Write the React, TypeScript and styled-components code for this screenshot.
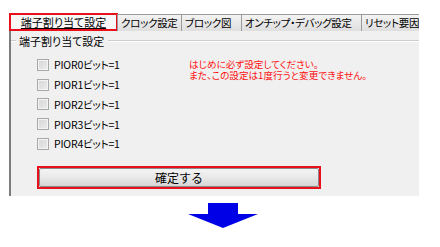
import React from 'react';
import styled, { createGlobalStyle } from 'styled-components';

const GlobalStyle = createGlobalStyle`
  html, body {
    margin: 0;
    padding: 0;
    background: #ffffff;
  }
  body {
    font-family: "Noto Sans CJK JP", "Liberation Sans", sans-serif;
    color: #000;
  }
`;

const Page = styled.div`
  width: 440px;
  height: 247px;
  padding: 13px 0 0 9px;
  box-sizing: border-box;
  overflow: hidden;
`;

const Window = styled.div`
  width: 410px;
`;

const TabBar = styled.div`
  display: flex;
  align-items: flex-end;
  height: 18px;
  overflow: hidden;
  white-space: nowrap;
`;

const Tab = styled.div<{ $width?: number; $active?: boolean }>`
  flex: 0 0 auto;
  width: ${p => (p.$width ? `${p.$width}px` : 'auto')};
  box-sizing: border-box;
  height: ${p => (p.$active ? 18 : 17)}px;
  padding: 0 ${p => (p.$active ? 5 : 3)}px;
  font-size: ${p => (p.$active ? 11 : 10.5)}px;
  letter-spacing: ${p => (p.$active ? 0 : -0.3)}px;
  line-height: ${p => (p.$active ? 14 : 15)}px;
  font-feature-settings: "palt";
  overflow: hidden;
  text-align: ${p => (p.$active ? 'center' : 'left')};
  background: ${p => (p.$active ? '#f7f7f7' : 'linear-gradient(#f3f3f3, #dedede)')};
  border: ${p => (p.$active ? '2px solid #e8101a' : '1px solid #9a9a9a')};
  border-bottom: ${p => (p.$active ? '2px solid #e8101a' : 'none')};
  margin-left: ${p => (p.$active ? 0 : -1)}px;
  text-decoration: ${p => (p.$active ? 'underline' : 'none')};
  text-underline-offset: 1px;
`;

const Panel = styled.div`
  height: 165px;
  background: #f0f0f0;
  border-left: 2px solid #7c7c7c;
  box-sizing: border-box;
  padding: 4px 0 6px 0;
  display: flex;
  flex-direction: column;
`;

const GroupHeader = styled.div`
  display: flex;
  align-items: center;
  height: 12px;
  font-size: 11px;
  line-height: 12px;
  font-feature-settings: "palt";
`;

const GroupLine = styled.span<{ $width?: number }>`
  flex: ${p => (p.$width ? `0 0 ${p.$width}px` : '1 1 auto')};
  height: 0;
  border-top: 1px solid #cdcdcd;
  border-bottom: 1px solid #ffffff;
`;

const GroupTitle = styled.span`
  padding: 0 4px 0 3px;
`;

const GroupBody = styled.div`
  display: flex;
  padding: 8px 0 0 26px;
`;

const OptionList = styled.div`
  width: 152px;
  display: flex;
  flex-direction: column;
`;

const OptionRow = styled.label`
  display: flex;
  align-items: center;
  height: 19.75px;
  font-size: 10.5px;
  letter-spacing: -0.2px;
  gap: 5px;
  font-feature-settings: "palt";
`;

const CheckBox = styled.span`
  width: 12px;
  height: 12px;
  box-sizing: border-box;
  border: 1px solid #a8a8a8;
  background: linear-gradient(135deg, #d6d6d6, #ececec);
  box-shadow: inset 0 0 0 1px #f4f4f4;
`;

const Note = styled.div`
  margin-top: 4px;
  font-size: 9.6px;
  line-height: 11px;
  color: #ff1010;
  font-feature-settings: "palt";
`;

const NoteLine = styled.div`
  white-space: nowrap;
`;

const ButtonFrame = styled.div`
  margin: 12px 0 0 26px;
  width: 284px;
  height: 23px;
  box-sizing: border-box;
  border: 2px solid #e8101a;
  display: flex;
`;

const ConfirmButton = styled.button`
  flex: 1;
  margin: 0;
  padding: 0;
  border: 1px solid #8a8a8a;
  border-radius: 2px;
  background: linear-gradient(#f4f4f4 0%, #e8e8e8 50%, #d6d6d6 100%);
  font-family: "Noto Sans CJK JP", sans-serif;
  font-size: 12px;
  line-height: 17px;
  color: #000;
`;

const ArrowWrap = styled.div`
  margin: 7px 0 0 179px;
  height: 26px;
`;

const DownArrow = () => (
  <svg width="70" height="26" viewBox="0 0 70 26">
    <path d="M20 0 H50 V11 H70 L35 25 L0 11 H20 Z" fill="#0000e6" />
  </svg>
);

const tabs = [
  { label: 'クロック設定', width: 65 },
  { label: 'ブロック図', width: 61 },
  { label: 'オンチップ・デバッグ設定', width: 121 },
  { label: 'リセット要因', width: 70 },
];

const options = [0, 1, 2, 3, 4];

export default function App() {
  return (
    <Page>
      <GlobalStyle />
      <Window>
        <TabBar>
          <Tab $active $width={109}>端子割り当て設定</Tab>
          {tabs.map(t => (
            <Tab key={t.label} $width={t.width}>{t.label}</Tab>
          ))}
        </TabBar>
        <Panel>
          <GroupHeader>
            <GroupLine $width={5} />
            <GroupTitle>端子割り当て設定</GroupTitle>
            <GroupLine />
          </GroupHeader>
          <GroupBody>
            <OptionList>
              {options.map(n => (
                <OptionRow key={n}>
                  <CheckBox />
                  PIOR{n}ビット=1
                </OptionRow>
              ))}
            </OptionList>
            <Note>
              <NoteLine>はじめに必ず設定してください。</NoteLine>
              <NoteLine>また、この設定は1度行うと変更できません。</NoteLine>
            </Note>
          </GroupBody>
          <ButtonFrame>
            <ConfirmButton>確定する</ConfirmButton>
          </ButtonFrame>
        </Panel>
      </Window>
      <ArrowWrap>
        <DownArrow />
      </ArrowWrap>
    </Page>
  );
}
